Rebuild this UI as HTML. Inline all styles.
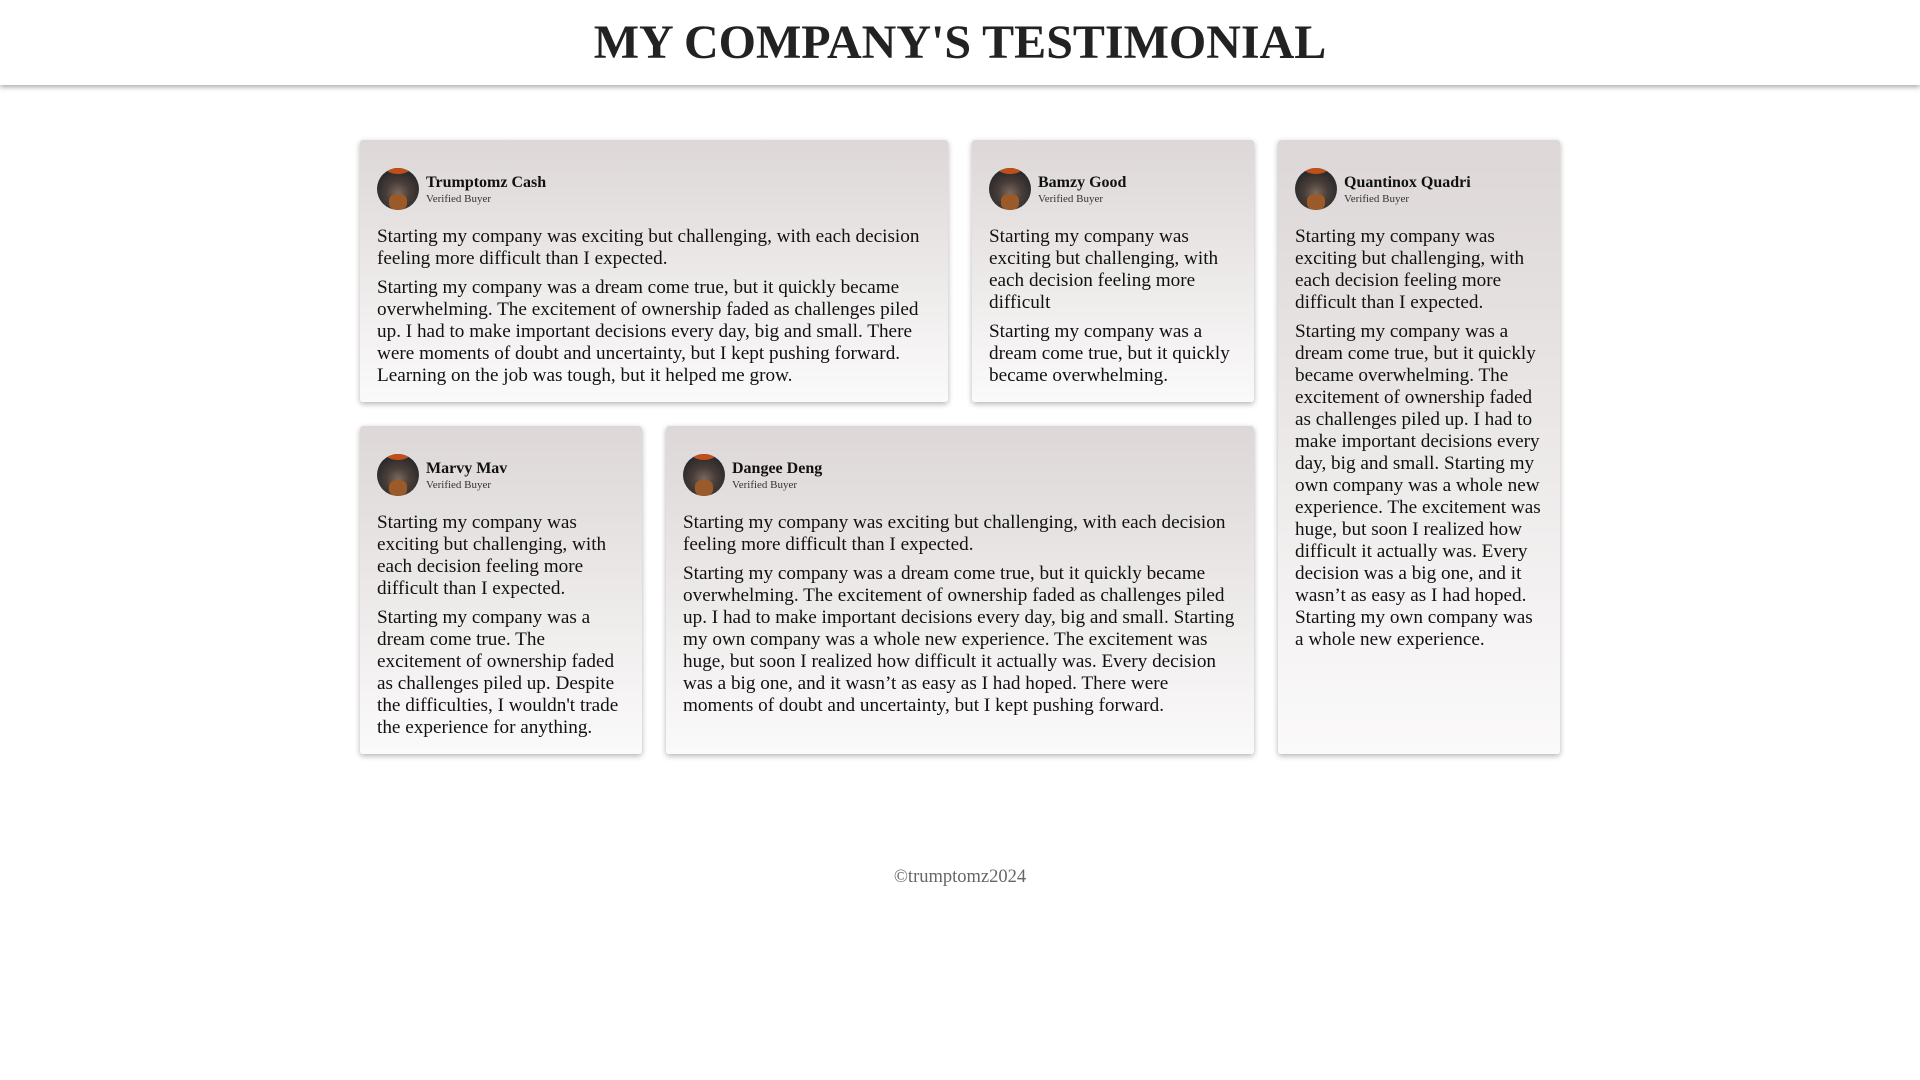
<!DOCTYPE html>
<html><head><meta charset="utf-8"><style>
*{box-sizing:border-box;margin:0;padding:0}
body{width:1920px;height:1080px;background:#fff;font-family:"Liberation Serif",serif;color:#111;overflow:hidden}
header{height:85px;background:#fff;box-shadow:0 2px 5px rgba(0,0,0,.35);display:flex;align-items:center;justify-content:center}
h1{font-size:48px;font-weight:bold;color:#222;margin-top:0px;font-family:"Liberation Serif",serif}
.grid{position:absolute;left:360px;top:140px;width:1200px;display:grid;grid-template-columns:repeat(4,282px);grid-template-rows:262px 328px;gap:24px}
.card{background:linear-gradient(180deg,#ddd7d7 0%,#fbfafa 100%);box-shadow:0 2px 6px rgba(0,0,0,.3);border-radius:3px;padding:28px 17px 15px 17px}
.hd{display:flex;align-items:center;height:42px;margin-bottom:16px}
.av{width:42px;height:42px;border-radius:50%;background:radial-gradient(circle at 50% 60%,#7a6a60 0%,#4a3e38 35%,#2a2a2c 70%,#1e2a2c 100%);position:relative;overflow:hidden;flex:none}
.av:before{content:"";position:absolute;left:10px;top:-3px;width:22px;height:9px;border-radius:50%;background:#c0501a}
.av:after{content:"";position:absolute;left:12px;top:26px;width:18px;height:16px;border-radius:40%;background:#9a5a2a}
.nm{margin-left:7px;line-height:1;font-family:"Liberation Serif",serif;margin-top:1px}
.nm b{display:block;font-size:16px;font-weight:bold}
.nm span{display:block;font-size:11px;color:#333;margin-top:3px}
p{font-size:19.2px;line-height:22px;margin-bottom:7px}
.c1{grid-column:1/3;grid-row:1}
.c2{grid-column:3;grid-row:1}
.c3{grid-column:4;grid-row:1/3}
.c4{grid-column:1;grid-row:2}
.c5{grid-column:2/4;grid-row:2}
footer{position:absolute;top:867px;left:0;width:1920px;text-align:center;font-size:18.5px;color:#666}
</style></head><body>
<header><h1>MY COMPANY'S TESTIMONIAL</h1></header>
<div class="grid">
<div class="card c1"><div class="hd"><div class="av"></div><div class="nm"><b>Trumptomz Cash</b><span>Verified Buyer</span></div></div>
<p>Starting my company was exciting but challenging, with each decision feeling more difficult than I expected.</p>
<p>Starting my company was a dream come true, but it quickly became overwhelming. The excitement of ownership faded as challenges piled up. I had to make important decisions every day, big and small. There were moments of doubt and uncertainty, but I kept pushing forward. Learning on the job was tough, but it helped me grow.</p></div>
<div class="card c2"><div class="hd"><div class="av"></div><div class="nm"><b>Bamzy Good</b><span>Verified Buyer</span></div></div>
<p>Starting my company was exciting but challenging, with each decision feeling more difficult</p>
<p>Starting my company was a dream come true, but it quickly became overwhelming.</p></div>
<div class="card c3"><div class="hd"><div class="av"></div><div class="nm"><b>Quantinox Quadri</b><span>Verified Buyer</span></div></div>
<p>Starting my company was exciting but challenging, with each decision feeling more difficult than I expected.</p>
<p>Starting my company was a dream come true, but it quickly became overwhelming. The excitement of ownership faded as challenges piled up. I had to make important decisions every day, big and small. Starting my own company was a whole new experience. The excitement was huge, but soon I realized how difficult it actually was. Every decision was a big one, and it wasn’t as easy as I had hoped. Starting my own company was a whole new experience.</p></div>
<div class="card c4"><div class="hd"><div class="av"></div><div class="nm"><b>Marvy Mav</b><span>Verified Buyer</span></div></div>
<p>Starting my company was exciting but challenging, with each decision feeling more difficult than I expected.</p>
<p>Starting my company was a dream come true. The excitement of ownership faded as challenges piled up. Despite the difficulties, I wouldn't trade the experience for anything.</p></div>
<div class="card c5"><div class="hd"><div class="av"></div><div class="nm"><b>Dangee Deng</b><span>Verified Buyer</span></div></div>
<p>Starting my company was exciting but challenging, with each decision feeling more difficult than I expected.</p>
<p>Starting my company was a dream come true, but it quickly became overwhelming. The excitement of ownership faded as challenges piled up. I had to make important decisions every day, big and small. Starting my own company was a whole new experience. The excitement was huge, but soon I realized how difficult it actually was. Every decision was a big one, and it wasn’t as easy as I had hoped. There were moments of doubt and uncertainty, but I kept pushing forward.</p></div>
</div>
<footer>©trumptomz2024</footer>
</body></html>
